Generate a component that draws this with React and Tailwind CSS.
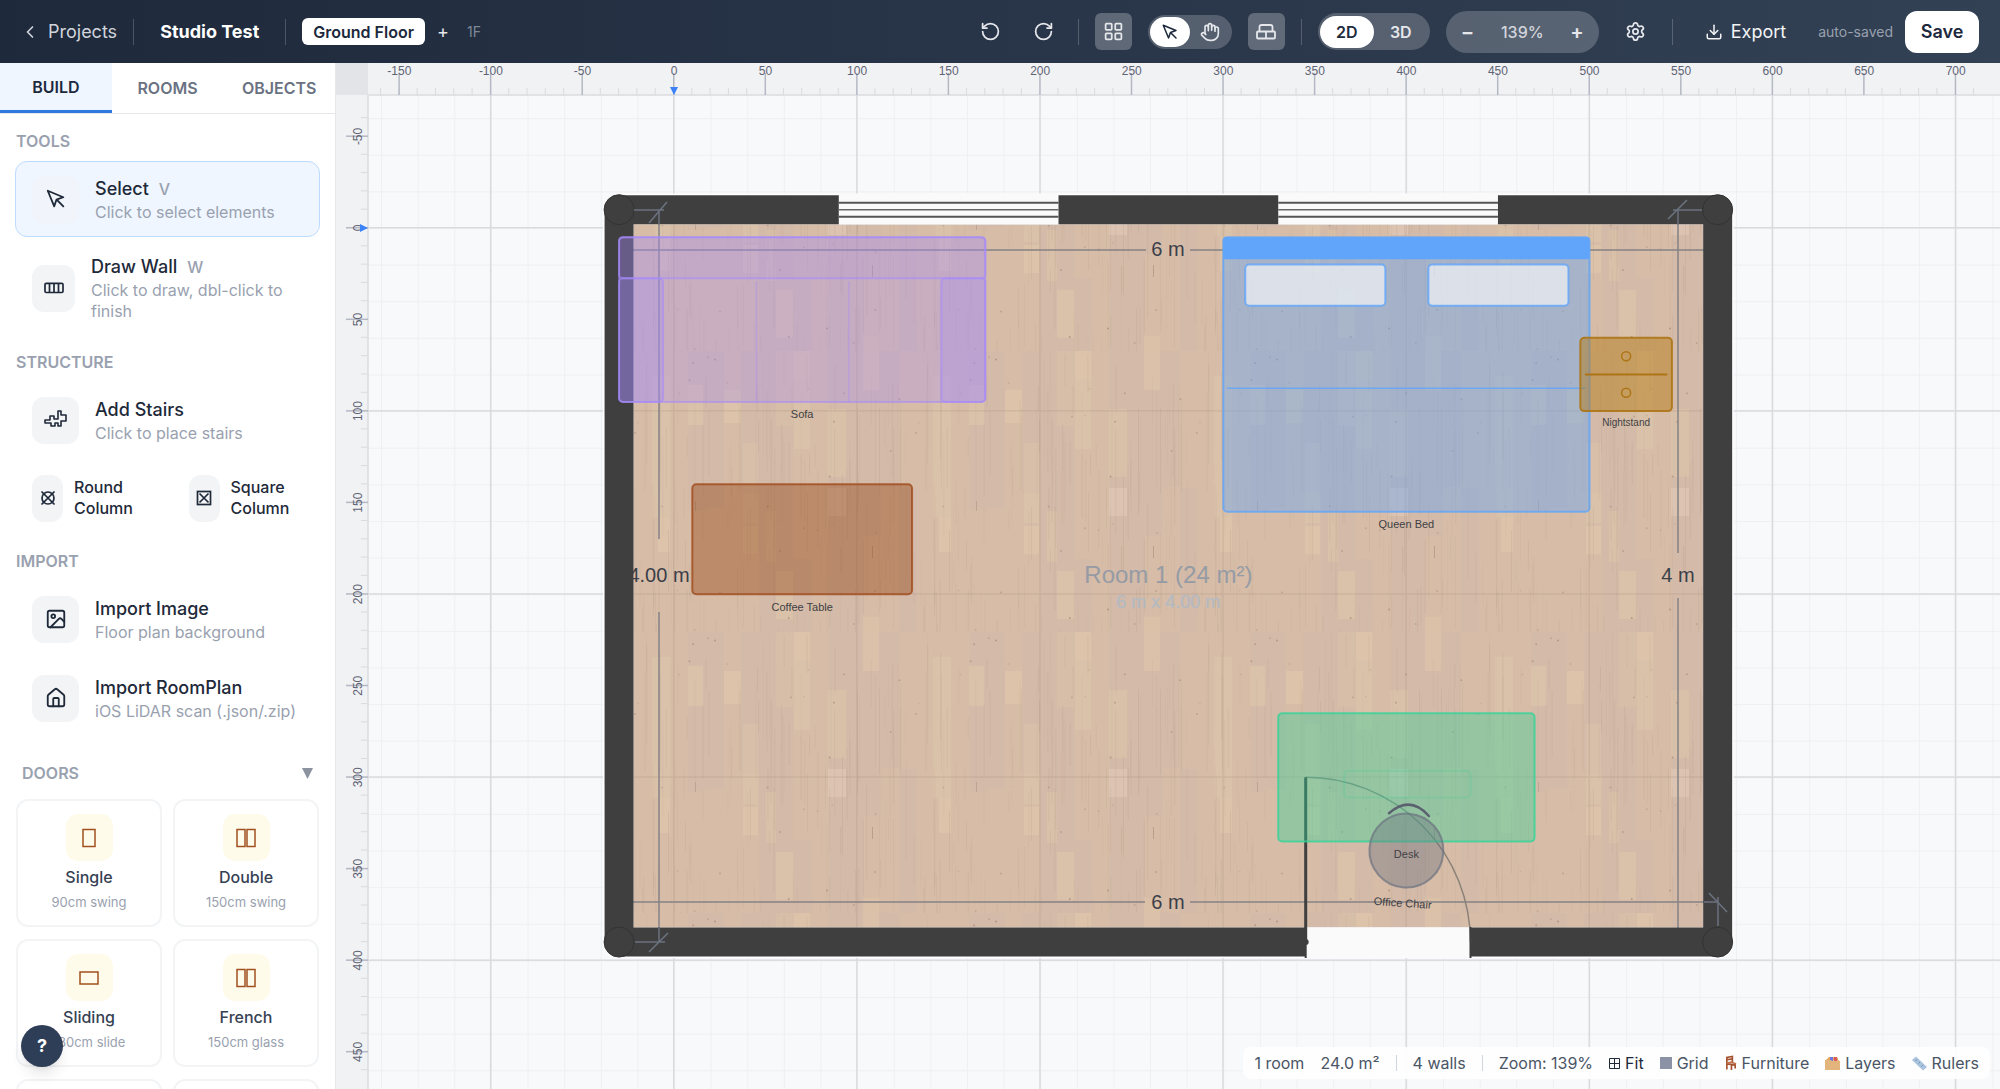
import { useEffect, useRef, useState } from 'react'
import {
  ChevronLeft,
  Download,
  Hand,
  House,
  Image,
  LayoutGrid,
  RotateCcw,
  RotateCw,
  Settings,
} from 'lucide-react'

// pixels per centimetre at 139%
const SCALE = 1.831
const cm = (v) => v * SCALE

// where the plan's 0,0 sits on the canvas
const ORIGIN = { x: 338, y: 165 }
const RULER = 32

const range = (from, to, step) => {
  const out = []
  for (let v = from; v <= to; v += step) out.push(v)
  return out
}

// small seeded generator so the wood grain is stable between renders
const makeRandom = (seed) => () => {
  seed = (seed * 1664525 + 1013904223) % 4294967296
  return seed / 4294967296
}

const TILE = 281
const rand = makeRandom(7)
const BOARDS = range(0, 15, 1).flatMap((col) => {
  const split = 60 + rand() * 160
  const tone = () => (rand() > 0.5 ? '#d4baa8' : '#d7bda7')
  return [
    { x: col * 17.6, y: 0, h: split, fill: tone() },
    { x: col * 17.6, y: split, h: TILE - split, fill: tone() },
  ]
})
const GRAIN = range(1, 140, 1).map(() => ({
  x: rand() * TILE,
  y: rand() * TILE,
  h: 20 + rand() * 90,
  o: 0.06 + rand() * 0.12,
}))
const KNOTS = range(1, 30, 1).map(() => ({ x: rand() * TILE, y: rand() * TILE, o: 0.15 + rand() * 0.3 }))
const LIGHT_PLANKS = [
  [0, 0, 17, 75, 0.3],
  [18, 0, 16, 28, 0.7],
  [18, 28, 16, 70, 0.35],
  [52, 58, 18, 68, 0.45],
  [87, 0, 16, 39, 0.6],
  [87, 266, 16, 15, 0.4],
  [157, 25, 18, 141, 0.35],
  [163, 166, 12, 35, 0.7],
  [193, 34, 15, 40, 0.5],
  [229, 39, 17, 33, 0.6],
  [248, 92, 15, 80, 0.35],
  [248, 175, 15, 28, 0.65],
  [271, 160, 10, 51, 0.45],
  [0, 220, 17, 48, 0.5],
]

const TOOLS = [
  { name: 'Select', shortcut: 'V', hint: 'Click to select elements', icon: CursorIcon, active: true },
  { name: 'Draw Wall', shortcut: 'W', hint: 'Click to draw, dbl-click to finish', icon: WallIcon, tall: true },
]

const IMPORTS = [
  { name: 'Import Image', hint: 'Floor plan background', icon: Image },
  { name: 'Import RoomPlan', hint: 'iOS LiDAR scan (.json/.zip)', icon: House },
]

const DOORS = [
  { name: 'Single', size: '90cm swing', shape: 'single' },
  { name: 'Double', size: '150cm swing', shape: 'double' },
  { name: 'Sliding', size: '180cm slide', shape: 'wide' },
  { name: 'French', size: '150cm glass', shape: 'double' },
  { shape: 'single' },
  { shape: 'double' },
]

function useSize(ref) {
  const [size, setSize] = useState({ width: 0, height: 0 })
  useEffect(() => {
    const update = () => setSize({ width: ref.current.clientWidth, height: ref.current.clientHeight })
    update()
    window.addEventListener('resize', update)
    return () => window.removeEventListener('resize', update)
  }, [ref])
  return size
}

function CursorIcon({ size = 20 }) {
  return (
    <svg width={size} height={size} viewBox="0 0 24 24" fill="none" stroke="currentColor" strokeWidth="2" strokeLinecap="round" strokeLinejoin="round">
      <path d="M3 3l7.07 16.97 2.51-7.39 7.39-2.51L3 3z" />
      <path d="M13 13l7 7" />
    </svg>
  )
}

function WallIcon() {
  return (
    <svg width="20" height="20" viewBox="0 0 20 20" fill="none" stroke="currentColor" strokeWidth="1.7">
      <rect x="1" y="5.3" width="18" height="9.2" rx="1.2" />
      <path d="M5.5 5.3v9.2M10 5.3v9.2M14.5 5.3v9.2" />
    </svg>
  )
}

function StairsIcon() {
  return (
    <svg width="24" height="20" viewBox="0 0 24 20" fill="none" stroke="currentColor" strokeWidth="1.6" strokeLinejoin="round">
      <path d="M1 10h5V6h4v3h4V1h3v4h5v6h-5v5h-3v-3h-3v3H7v-3H1z" />
    </svg>
  )
}

function RoundColumnIcon() {
  return (
    <svg width="16" height="16" viewBox="0 0 16 16" fill="none" stroke="currentColor" strokeWidth="1.7">
      <circle cx="8" cy="8" r="6" />
      <path d="M1.5 1.5l13 13M14.5 1.5l-13 13" />
    </svg>
  )
}

function SquareColumnIcon() {
  return (
    <svg width="16" height="16" viewBox="0 0 16 16" fill="none" stroke="currentColor" strokeWidth="1.7">
      <rect x="1.5" y="1.5" width="13" height="13" />
      <path d="M3.5 3.5l9 9M12.5 3.5l-9 9" />
    </svg>
  )
}

function SofaIcon() {
  return (
    <svg width="20" height="20" viewBox="0 0 20 20" fill="none" stroke="currentColor" strokeWidth="1.8" strokeLinejoin="round">
      <path d="M3.5 9.5V5q0-2 2-2h9q2 0 2 2v4.5" />
      <rect x="1" y="9.5" width="18" height="7" rx="1" />
      <path d="M10 9.5v7" />
    </svg>
  )
}

function DoorIcon({ shape }) {
  return (
    <svg width="22" height="20" viewBox="0 0 22 20" fill="none" stroke="#a1501f" strokeWidth="1.5">
      {shape === 'single' && <rect x="5" y="1.5" width="12" height="17" />}
      {shape === 'wide' && <rect x="2" y="4" width="18" height="12" />}
      {shape === 'double' && (
        <>
          <rect x="2" y="1.5" width="8" height="17" />
          <rect x="12" y="1.5" width="8" height="17" />
        </>
      )}
    </svg>
  )
}

function Divider() {
  return <span className="h-[26px] w-px shrink-0 bg-white/20" />
}

function Header({ view, setView }) {
  return (
    <header className="flex h-[63px] shrink-0 items-center justify-between bg-linear-to-r from-[#1e293b] to-[#334155] pr-[21px] pl-5 text-white">
      <div className="flex items-center">
        <a href="#projects" className="flex items-center gap-2 text-lg text-gray-300">
          <ChevronLeft size={20} />
          Projects
        </a>
        <span className="ml-4 flex"><Divider /></span>
        <h1 className="mx-[26px] text-lg font-bold">Studio Test</h1>
        <Divider />
        <button className="ml-4 h-[27px] rounded-md bg-white px-[11px] text-base font-semibold text-slate-800">
          Ground Floor
        </button>
        <button className="ml-3 text-lg text-gray-200" aria-label="Add floor">+</button>
        <span className="ml-[18px] text-sm text-gray-400/80">1F</span>
      </div>

      <div className="flex items-center text-gray-200">
        <button aria-label="Undo"><RotateCcw size={21} /></button>
        <button className="ml-8" aria-label="Redo"><RotateCw size={21} /></button>
        <span className="mr-4 ml-6 flex"><Divider /></span>
        <button className="flex size-[37px] items-center justify-center rounded-md bg-white/25" aria-label="Snap to grid">
          <LayoutGrid size={21} />
        </button>
        <div className="ml-4 flex h-[34px] items-center rounded-full bg-white/20 px-[2px]">
          <button className="flex h-[30px] w-10 items-center justify-center rounded-full bg-white text-slate-800" aria-label="Select">
            <CursorIcon size={18} />
          </button>
          <button className="flex w-10 items-center justify-center" aria-label="Pan"><Hand size={20} /></button>
        </div>
        <button className="mr-4 ml-4 flex size-[37px] items-center justify-center rounded-md bg-white/25" aria-label="Furniture">
          <SofaIcon />
        </button>
        <Divider />
        <div className="ml-4 flex h-[37px] items-center rounded-full bg-white/20 px-[2px] text-base font-semibold">
          {['2D', '3D'].map((v) => (
            <button
              key={v}
              onClick={() => setView(v)}
              className={`h-8 w-[54px] rounded-full ${view === v ? 'bg-white text-slate-800' : 'text-gray-200'}`}
            >
              {v}
            </button>
          ))}
        </div>
        <div className="ml-4 flex h-[42px] w-[153px] items-center justify-between rounded-full bg-white/20 px-[15px] text-base">
          <button className="text-xl font-semibold" aria-label="Zoom out">−</button>
          <span className="font-medium text-gray-300">139%</span>
          <button className="text-xl font-semibold" aria-label="Zoom in">+</button>
        </div>
        <button className="mr-[26px] ml-[26px]" aria-label="Settings"><Settings size={21} /></button>
        <Divider />
        <button className="ml-8 flex items-center gap-2 text-lg text-gray-100">
          <Download size={18} />
          Export
        </button>
        <span className="ml-8 text-sm text-gray-400">auto-saved</span>
        <button className="ml-3 h-[42px] w-[74px] rounded-xl bg-white text-lg font-semibold text-slate-800">Save</button>
      </div>
    </header>
  )
}

function SectionLabel({ children }) {
  return <h2 className="mt-4 mb-[10px] px-px text-base leading-5 font-semibold text-gray-400">{children}</h2>
}

function ToolItem({ name, hint, icon: Icon, active, tall, shortcut }) {
  return (
    <button
      className={`flex w-full items-center gap-4 rounded-xl border px-4 text-left
        ${tall ? 'h-24' : 'h-[76px]'}
        ${active ? 'border-blue-200 bg-blue-50' : 'border-transparent'}`}
    >
      <span className={`flex h-[47px] shrink-0 items-center justify-center rounded-xl text-gray-800
        ${active ? 'bg-[#f1f4fa]' : 'bg-gray-100'} ${tall ? 'w-[43px]' : 'w-[47px]'}`}>
        <Icon size={22} />
      </span>
      <span className="min-w-0">
        <span className="block text-lg leading-[26px] font-medium text-gray-800">
          {name}
          {shortcut && <span className="ml-[10px] text-base text-gray-400">{shortcut}</span>}
        </span>
        <span className="block text-base leading-[21px] text-gray-400">{hint}</span>
      </span>
    </button>
  )
}

function ColumnItem({ name, icon: Icon }) {
  return (
    <button className="flex h-[74px] items-center gap-[11px] px-[17px] text-left">
      <span className="flex h-[47px] w-[31px] shrink-0 items-center justify-center rounded-xl bg-gray-100 text-gray-800">
        <Icon />
      </span>
      <span className="w-16 text-base leading-[21px] font-medium text-gray-800">{name}</span>
    </button>
  )
}

function Sidebar() {
  const [tab, setTab] = useState('BUILD')

  return (
    <aside className="flex w-[336px] shrink-0 flex-col border-r border-gray-200 bg-white">
      <nav className="grid h-[51px] shrink-0 grid-cols-3 border-b border-gray-200 text-base font-semibold">
        {['BUILD', 'ROOMS', 'OBJECTS'].map((t) => (
          <button
            key={t}
            onClick={() => setTab(t)}
            className={tab === t ? 'border-b-[3px] border-[#2f78e0] bg-blue-50 text-slate-800' : 'text-gray-500'}
          >
            {t}
          </button>
        ))}
      </nav>

      <div className="min-h-0 flex-1 overflow-y-auto px-[15px] pt-px [scrollbar-width:none]">
        <SectionLabel>TOOLS</SectionLabel>
        <div className="flex flex-col gap-[3px]">
          {TOOLS.map((t) => (
            <ToolItem key={t.name} {...t} />
          ))}
        </div>

        <SectionLabel>STRUCTURE</SectionLabel>
        <ToolItem name="Add Stairs" hint="Click to place stairs" icon={StairsIcon} />
        <div className="mt-[3px] grid grid-cols-2 gap-2">
          <ColumnItem name="Round Column" icon={RoundColumnIcon} />
          <ColumnItem name="Square Column" icon={SquareColumnIcon} />
        </div>

        <SectionLabel>IMPORT</SectionLabel>
        <div className="flex flex-col gap-[3px]">
          {IMPORTS.map((t) => (
            <ToolItem key={t.name} {...t} />
          ))}
        </div>

        <button className="mt-[27px] mb-4 flex w-full items-center justify-between px-[7px] text-base leading-5 font-semibold text-gray-400">
          DOORS
          <svg width="11" height="11" viewBox="0 0 11 11" fill="#8b93a1"><path d="M0 0h11L5.5 11z" /></svg>
        </button>
        <div className="grid grid-cols-2 gap-x-[11px] gap-y-3 px-px">
          {DOORS.map((d, i) => (
            <button key={i} className="flex h-32 flex-col items-center rounded-xl border-2 border-gray-100 pt-[13px]">
              <span className="flex size-[47px] items-center justify-center rounded-xl bg-amber-50">
                <DoorIcon shape={d.shape} />
              </span>
              <span className="mt-1 text-base leading-6 font-medium text-gray-700">{d.name}</span>
              <span className="mt-[3px] text-[13px] leading-5 text-gray-400">{d.size}</span>
            </button>
          ))}
        </div>
      </div>
    </aside>
  )
}

function WoodPattern() {
  return (
    <pattern id="wood" patternUnits="userSpaceOnUse" x="102" y="404" width={TILE} height={TILE}>
      <rect width={TILE} height={TILE} fill="#d6bca7" />
      {BOARDS.map((b, i) => (
        <rect key={i} x={b.x} y={b.y} width="17.6" height={b.h} fill={b.fill} />
      ))}
      {LIGHT_PLANKS.map(([x, y, w, h, o], i) => (
        <rect key={i} x={x} y={y} width={w} height={h} fill="#e0c7aa" opacity={o} />
      ))}
      <rect x="52" y="137" width="18" height="28" fill="#dec5b4" opacity="0.8" />
      {GRAIN.map((g, i) => (
        <rect key={i} x={g.x} y={g.y} width="1" height={g.h} fill="#a58a78" opacity={g.o} />
      ))}
      {KNOTS.map((k, i) => (
        <circle key={i} cx={k.x} cy={k.y} r="1" fill="#8a6a5c" opacity={k.o} />
      ))}
      <rect x="96" y="195" width="1" height="12" fill="#8a7468" opacity="0.4" />
      <rect x="200" y="150" width="1" height="10" fill="#8a7468" opacity="0.3" />
    </pattern>
  )
}

function Grid() {
  return (
    <g>
      {range(-180, 1800, 20).map((v) => (
        <rect key={`x${v}`} x={cm(v)} y="-165" width="1" height="2000" fill="#eef0f3" />
      ))}
      {range(-60, 1000, 20).map((v) => (
        <rect key={`y${v}`} x="-340" y={cm(v)} width="4000" height="1" fill="#eef0f3" />
      ))}
      {range(-100, 1800, 100).map((v) => (
        <rect key={`X${v}`} x={cm(v) - 1} y="-165" width="1.5" height="2000" fill="#d9dbde" />
      ))}
      {range(0, 1000, 100).map((v) => (
        <rect key={`Y${v}`} x="-340" y={cm(v) - 1} width="4000" height="1.5" fill="#d9dbde" />
      ))}
    </g>
  )
}

function Dimensions() {
  return (
    <g stroke="#858285" strokeWidth="1.5" fill="none">
      <path d="M-55 22H472M516 22H1045" />
      <path d="M-55 674H471M516 674H1045" />
      <path d="M-15 -18V311M-15 384V714" />
      <path d="M1004 -18V325M1004 370V714" />
      <g stroke="none" fill="#3b3f4a" fontSize="20" textAnchor="middle">
        <text x="494" y="28">6 m</text>
        <text x="494" y="681">6 m</text>
        <text x="-15" y="354">4.00 m</text>
        <text x="1004" y="354">4 m</text>
      </g>
    </g>
  )
}

function Walls() {
  const joints = [[-30, -10], [570, -10], [-30, 390], [570, 390]]
  const outline = `M${cm(-30)} ${cm(-10)}H${cm(570)}V${cm(390)}H${cm(-30)}Z`
  return (
    <g>
      <path d={outline} fill="none" stroke="#fff" strokeWidth="32" strokeLinejoin="round" />
      <rect x={cm(-22)} y={cm(-2)} width={cm(584)} height={cm(384)} fill="url(#wood)" />
      <g fill="#8a7468" opacity="0.15">
        {[0, 100, 200, 300, 400, 500].map((v) => (
          <rect key={v} x={cm(v) - 1} y={cm(-2)} width="1.5" height={cm(384)} />
        ))}
        {[100, 200, 300].map((v) => (
          <rect key={v} x={cm(-22)} y={cm(v) - 1} width={cm(584)} height="1.5" />
        ))}
      </g>
      <g textAnchor="middle" fill="#8f98a5">
        <text x={cm(270)} y="355" fontSize="24" opacity="0.9">Room 1 (24 m²)</text>
        <text x={cm(270)} y="380" fontSize="18" fill="#a9b6c4" stroke="#b6bfc9" strokeWidth="0.5" opacity="0.8">6 m x 4.00 m</text>
      </g>
      <Dimensions />
      <path d={outline} fill="none" stroke="#3f3f3f" strokeWidth="29" strokeLinejoin="round" />
      {joints.map(([x, y]) => (
        <circle key={`${x},${y}`} cx={cm(x)} cy={cm(y)} r="15" fill="#3f3f3f" stroke="#333" />
      ))}
      {/* witness marks drawn over the wall ends */}
      <g stroke="#6b7280" strokeWidth="1.5" fill="none">
        <path d="M-40 -18h30M-25 -5l18 -21M-15 -18v14" />
        <path d="M999 -18h29M994 -9l19 -19M1004 -18v14" />
        <path d="M-39 714h30M-25 724l19 -19M-15 714v-14" />
        <path d="M1044 669v29M1035 665l18 19M1030 674h14" />
      </g>
    </g>
  )
}

function WindowGap({ x }) {
  return (
    <g transform={`translate(${cm(x)} ${cm(-10)})`}>
      <rect x="0" y="-16" width={cm(120)} height="31" fill="#fafafa" />
      <path d={`M0 -7h${cm(120)}M0 7h${cm(120)}`} stroke="#555" strokeWidth="2" />
      <path d={`M0 0h${cm(120)}`} stroke="#666" strokeWidth="1.5" />
    </g>
  )
}

function DoorGap() {
  const r = cm(90)
  return (
    <g transform={`translate(${cm(345)} ${cm(390)})`} stroke="#3f3f3f" fill="none">
      <rect x="0" y="-15" width={r} height="31" fill="#fafafa" stroke="none" />
      <path d={`M0 ${-r}A${r} ${r} 0 0 1 ${r} 0`} stroke="#8a8279" strokeWidth="1.5" />
      <path d={`M0 0V${-r}`} strokeWidth="3" />
      <path d={`M0 -15V16M${r} -15V16`} strokeWidth="2" />
      <circle r="2" fill="#3f3f3f" />
    </g>
  )
}

function Piece({ x, y, w, h, ...rest }) {
  return <rect x={cm(x)} y={cm(y)} width={cm(w)} height={cm(h)} rx="4" {...rest} />
}

function Furniture() {
  return (
    <g strokeWidth="2">
      {/* sofa */}
      <g fill="#a78bfa" stroke="#a78bfa" strokeOpacity="0.6">
        <Piece x={-30} y={5} w={200} h={90} fillOpacity="0.3" />
        <Piece x={-30} y={5} w={200} h={22.5} fillOpacity="0.13" />
        <Piece x={-30} y={27.5} w={24} h={67.5} fillOpacity="0.3" />
        <Piece x={146} y={27.5} w={24} h={67.5} fillOpacity="0.3" />
        <path d={`M${cm(45)} ${cm(29)}V${cm(95)}M${cm(95.5)} ${cm(29)}V${cm(95)}`} strokeWidth="1.5" strokeOpacity="0.4" />
      </g>
      <Piece x={10} y={140} w={120} h={60} fill="#92400e" fillOpacity="0.4" stroke="#a04a1c" strokeOpacity="0.8" />
      {/* bed */}
      <g fill="#60a5fa" stroke="#60a5fa">
        <Piece x={300} y={5} w={200} h={150} fillOpacity="0.4" strokeOpacity="0.8" />
        <Piece x={300} y={5} w={200} h={12} rx="2" stroke="none" />
        <Piece x={312} y={20} w={76.5} h={22.5} fill="#fff" fillOpacity="0.6" strokeOpacity="0.8" />
        <Piece x={412} y={20} w={76.5} h={22.5} fill="#fff" fillOpacity="0.6" strokeOpacity="0.8" />
        <path d={`M${cm(302)} ${cm(87.5)}H${cm(498)}`} strokeWidth="1.5" strokeOpacity="0.8" />
      </g>
      {/* nightstand */}
      <g fill="none" stroke="#ad7416">
        <Piece x={495} y={60} w={50} h={40} fill="#b47a12" fillOpacity="0.48" strokeOpacity="0.9" />
        <path d={`M${cm(497.5)} ${cm(80)}H${cm(542.5)}`} />
        <circle cx={cm(520)} cy={cm(70)} r="4.5" strokeWidth="1.5" />
        <circle cx={cm(520)} cy={cm(90)} r="4.5" strokeWidth="1.5" />
      </g>
      <DoorGap />
      {/* desk */}
      <g stroke="#34d399">
        <Piece x={330} y={265} w={140} h={70} fill="#34d399" fillOpacity="0.4" strokeOpacity="0.8" />
        <Piece x={366} y={296.5} w={69} h={14.5} fill="none" strokeWidth="1.5" strokeOpacity="0.25" />
      </g>
      {/* office chair */}
      <g transform={`rotate(4 ${cm(400)} ${cm(340)})`} stroke="#6b7280">
        <circle cx={cm(400)} cy={cm(340)} r="37" fill="#6b7280" fillOpacity="0.4" strokeOpacity="0.7" />
        <path d={`M${cm(400) - 20} ${cm(340) - 36}q20 -20 40 0`} fill="none" stroke="#5b6170" strokeWidth="2.5" strokeLinecap="round" />
        <text x={cm(400)} y="679" fontSize="11" textAnchor="middle" fill="#3f3f44" stroke="none">Office Chair</text>
      </g>
      <g fontSize="11" textAnchor="middle" fill="#3f3f44">
        <text x={cm(70)} y="190">Sofa</text>
        <text x={cm(70)} y="383">Coffee Table</text>
        <text x={cm(400)} y="300">Queen Bed</text>
        <text x={cm(520)} y="198" fontSize="10">Nightstand</text>
        <text x={cm(400)} y="630">Desk</text>
      </g>
    </g>
  )
}

function Rulers({ width, height }) {
  const topTicks = range(-160, (width - ORIGIN.x - 14) / SCALE, 10)
  const leftTicks = range(-60, (height - ORIGIN.y - 14) / SCALE, 10)
  return (
    <g>
      <rect width={width} height={RULER} fill="#f1f2f4" />
      <rect width={RULER} height={height} fill="#f1f2f4" />
      <path d={`M${RULER} ${RULER}H${width}M${RULER} ${RULER}V${height}`} stroke="#d9dbdf" strokeWidth="1.5" />
      <rect width={RULER} height={RULER} fill="#e3e4e8" />
      <g fontSize="12" textAnchor="middle" fill="#5f6475">
        {topTicks.map((v) => {
          const x = ORIGIN.x + cm(v)
          return v % 50 === 0 ? (
            <g key={v}>
              <rect x={x - 1} y="10" width="1.5" height="22" fill="#b4b8c4" />
              <text x={x} y="12">{v}</text>
            </g>
          ) : (
            <rect key={v} x={x - 1} y="25" width="1" height="7" fill="#d9dbdf" />
          )
        })}
        {leftTicks.map((v) => {
          const y = ORIGIN.y + cm(v)
          return v % 50 === 0 ? (
            <g key={v}>
              <rect x="10" y={y - 1} width="22" height="1.5" fill="#b4b8c4" />
              <text transform={`translate(26 ${y}) rotate(-90)`}>{v}</text>
            </g>
          ) : (
            <rect key={v} x="25" y={y - 1} width="7" height="1" fill="#d9dbdf" />
          )
        })}
      </g>
      <path d={`M${ORIGIN.x - 4} 24h8l-4 8z`} fill="#3b82f6" />
      <path d={`M24 ${ORIGIN.y - 4}v8l8 -4z`} fill="#3b82f6" />
    </g>
  )
}

function StatusBar() {
  return (
    <div className="absolute right-[10px] bottom-[10px] flex h-8 items-center rounded-lg bg-white/90 px-[11px] text-base text-gray-600">
      <span>1 room</span>
      <span className="ml-4">24.0 m²</span>
      <span className="mx-4 h-4 w-px bg-gray-300" />
      <span>4 walls</span>
      <span className="mx-4 h-4 w-px bg-gray-300" />
      <span>Zoom: 139%</span>
      <button className="ml-4 flex items-center gap-[5px] text-gray-800">
        <svg width="11" height="11" viewBox="0 0 11 11" fill="none" stroke="currentColor"><path d="M.5.5h10v10H.5zM5.5 0v11M0 5.5h11" /></svg>
        Fit
      </button>
      <button className="ml-4 flex items-center gap-[5px]">
        <span className="size-3 bg-[#8b92a5]" />
        Grid
      </button>
      <button className="ml-4 flex items-center gap-[5px]">
        <svg width="12" height="16" viewBox="0 0 13 16" fill="none" stroke="#a5532f" strokeWidth="1.8">
          <path d="M2 9V2l6 -1v6M2 4.5l6 -1M2 9v6M2 9l9 1v4M7 9v6.5" />
          <path d="M2 8l5 -1 5 2" stroke="#c0714a" />
        </svg>
        Furniture
      </button>
      <button className="ml-4 flex items-center gap-[5px]">
        <svg width="15" height="14" viewBox="0 0 15 14">
          <path d="M1 4l3-3h8l2 4z" fill="#e7a35c" />
          <rect x="5" y="1" width="3" height="4" fill="#6d78e0" />
          <rect x="9" y="1" width="3" height="4" fill="#dc5a5a" />
          <path d="M0 4h6l1 1h8v9H0z" fill="#e3b47c" />
        </svg>
        Layers
      </button>
      <button className="ml-4 flex items-center gap-[5px]">
        <svg width="15" height="15" viewBox="0 0 15 15">
          <path d="M0 4l4 -3.5L15 11l-4 3.5z" fill="#a9c3de" />
          <path d="M5 3.5l-1.5 1.5M8 6l-1.5 1.5M11 9l-1.5 1.5" stroke="#6f8fb0" />
        </svg>
        Rulers
      </button>
    </div>
  )
}

export default function App() {
  const [view, setView] = useState('2D')
  const canvas = useRef(null)
  const { width, height } = useSize(canvas)

  return (
    <div className="flex h-screen flex-col overflow-hidden font-['Inter',sans-serif]">
      <Header view={view} setView={setView} />
      <div className="flex min-h-0 flex-1">
        <Sidebar />
        <main ref={canvas} className="relative min-w-0 flex-1 overflow-hidden bg-[#f8f9fb]">
          <svg className="block h-full w-full font-['Liberation_Sans',sans-serif]">
            <defs>
              <WoodPattern />
            </defs>
            <g transform={`translate(${ORIGIN.x} ${ORIGIN.y})`}>
              <Grid />
              <Walls />
              <WindowGap x={90} />
              <WindowGap x={330} />
              <Furniture />
            </g>
            <Rulers width={width} height={height} />
          </svg>
          <StatusBar />
        </main>
      </div>
      <button className="absolute bottom-[22px] left-[21px] size-[42px] rounded-full bg-[#2f3e57] text-lg font-bold text-white shadow-lg" aria-label="Help">
        ?
      </button>
    </div>
  )
}
